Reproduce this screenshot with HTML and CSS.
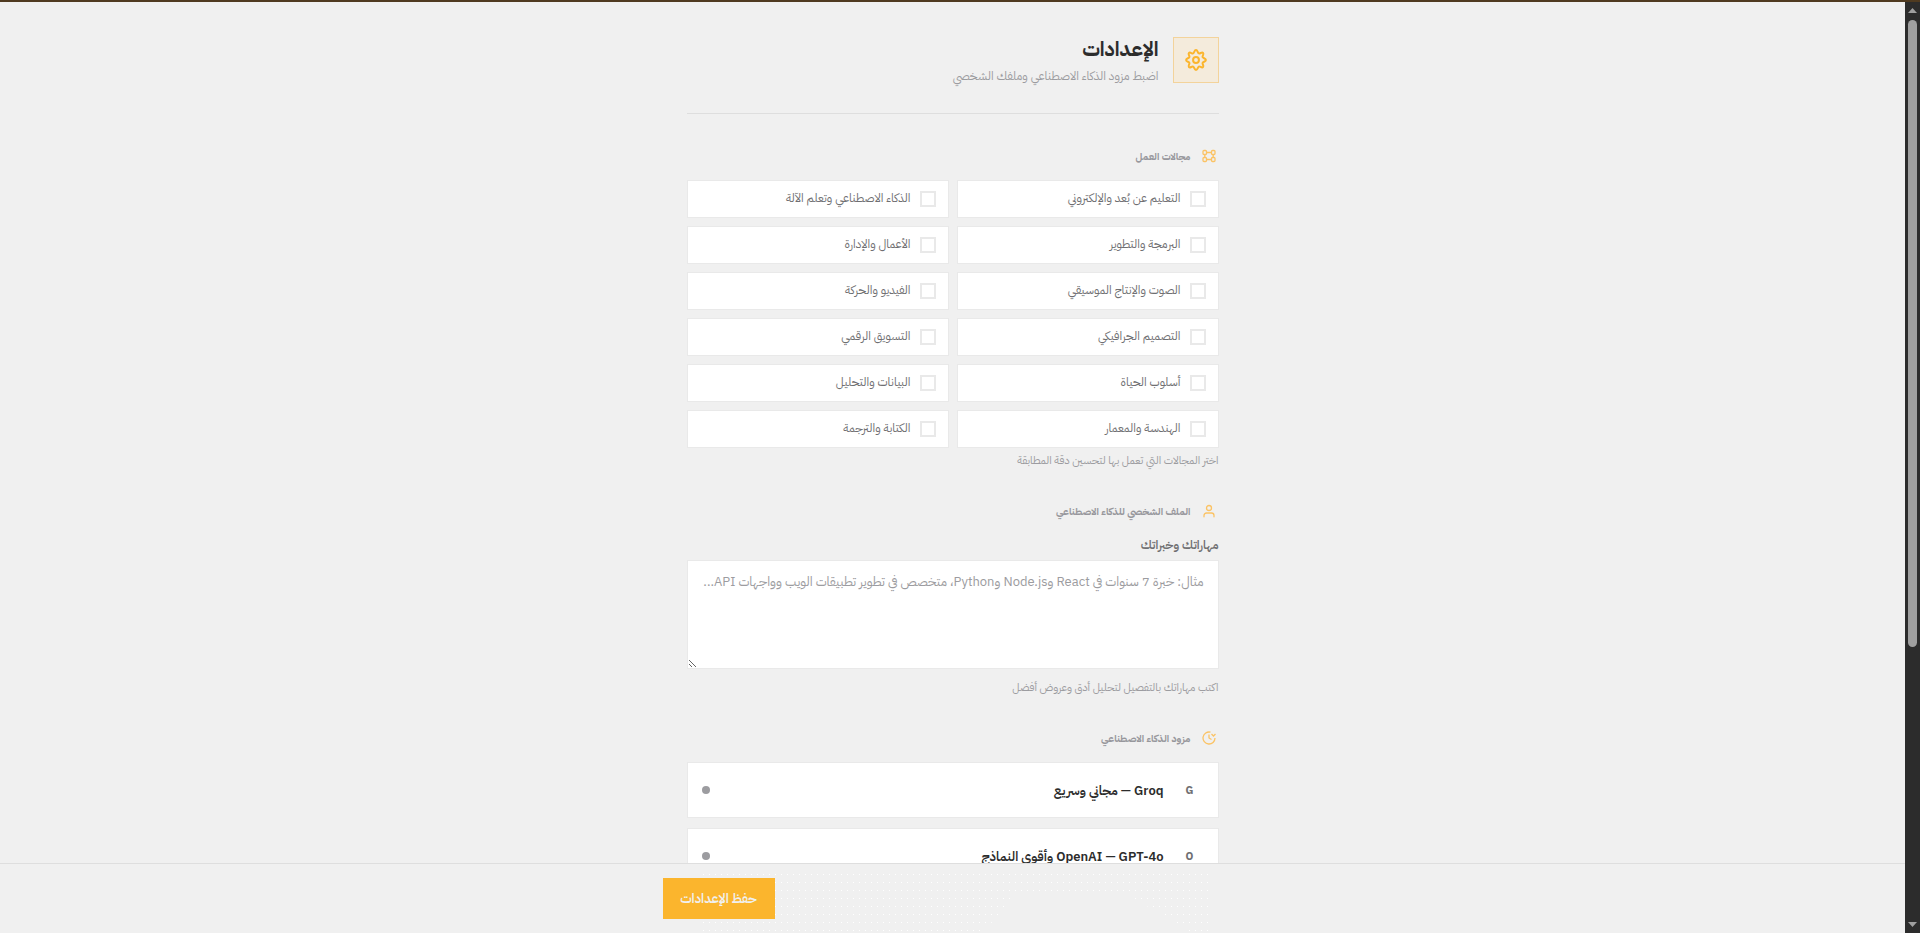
FILE: index.html
```html
<!DOCTYPE html>
<html lang="ar" dir="rtl">
<head>
  <meta charset="UTF-8">
  <title>الإعدادات</title>
  <link rel="stylesheet" href="styles.css">
</head>
<body>
  <div class="top-line"></div>
  <div class="frame">
    <div class="scrollbar">
      <svg width="9" height="5" viewBox="0 0 9 5"><path d="M0 5L4.500 0L9 5z" fill="#9f9f9f"/></svg>
      <div class="track"><div class="thumb"></div></div>
      <svg width="9" height="5" viewBox="0 0 9 5"><path d="M0 0h9L4.500 5z" fill="#9f9f9f"/></svg>
    </div>

    <div class="view">
      <main class="page">
        <header class="page-header">
          <div class="header-icon">
            <svg width="22" height="22" viewBox="0 0 24 24" fill="none" stroke="currentColor" stroke-width="2.2" stroke-linejoin="round"><circle cx="12" cy="12" r="3.2"/><path d="M12 1.200c1.900 0 1.700 3 3.100 3.600s3.300-1.900 4.600-.5-1.100 3.300-.5 4.600 3.600 1.200 3.600 3.100-3 1.700-3.600 3.100 1.900 3.300.5 4.600-3.300-1.100-4.600-.5-1.200 3.600-3.100 3.600-1.700-3-3.100-3.600-3.300 1.900-4.600.5 1.100-3.300.5-4.600-3.600-1.200-3.600-3.100 3-1.700 3.600-3.100-1.900-3.300-.5-4.600 3.300 1.100 4.600.5 1.200-3.600 3.100-3.600z"/></svg>
          </div>
          <div>
            <h1>الإعدادات</h1>
            <p class="subtitle">اضبط مزود الذكاء الاصطناعي وملفك الشخصي</p>
          </div>
        </header>

        <section>
          <h2 class="section-title">
            <span class="section-icon"><svg width="14" height="14" viewBox="0 0 14 14" fill="none" stroke="currentColor" stroke-width="1.3"><rect x="1" y="1.500" width="3.500" height="4" rx="1"/><rect x="9.500" y="1.500" width="3.500" height="4" rx="1"/><rect x="1" y="8.500" width="3.500" height="4" rx="1"/><rect x="9.500" y="8.500" width="3.500" height="4" rx="1"/><path d="M4.500 3.500h5M4.500 10.500h5M2.800 5.500v3M11.200 5.500v3"/></svg></span>
            مجالات العمل
          </h2>
          <div class="fields">
            <label class="field"><input type="checkbox"><span>التعليم عن بُعد والإلكتروني</span></label>
            <label class="field"><input type="checkbox"><span>الذكاء الاصطناعي وتعلم الآلة</span></label>
            <label class="field"><input type="checkbox"><span>البرمجة والتطوير</span></label>
            <label class="field"><input type="checkbox"><span>الأعمال والإدارة</span></label>
            <label class="field"><input type="checkbox"><span>الصوت والإنتاج الموسيقي</span></label>
            <label class="field"><input type="checkbox"><span>الفيديو والحركة</span></label>
            <label class="field"><input type="checkbox"><span>التصميم الجرافيكي</span></label>
            <label class="field"><input type="checkbox"><span>التسويق الرقمي</span></label>
            <label class="field"><input type="checkbox"><span>أسلوب الحياة</span></label>
            <label class="field"><input type="checkbox"><span>البيانات والتحليل</span></label>
            <label class="field"><input type="checkbox"><span>الهندسة والمعمار</span></label>
            <label class="field"><input type="checkbox"><span>الكتابة والترجمة</span></label>
          </div>
          <p class="hint">اختر المجالات التي تعمل بها لتحسين دقة المطابقة</p>
        </section>

        <section>
          <h2 class="section-title">
            <span class="section-icon"><svg width="14" height="14" viewBox="0 0 14 14" fill="none" stroke="currentColor" stroke-width="1.3" stroke-linecap="round"><circle cx="7" cy="4" r="2.5"/><path d="M2 12.800v-1.300a2.500 2.500 0 0 1 2.500-2.500h5a2.500 2.500 0 0 1 2.500 2.500v1.300"/></svg></span>
            الملف الشخصي للذكاء الاصطناعي
          </h2>
          <label class="input-label" for="skills">مهاراتك وخبراتك</label>
          <textarea id="skills" placeholder="مثال: خبرة 7 سنوات في React وNode.js وPython، متخصص في تطوير تطبيقات الويب وواجهات API..."></textarea>
          <p class="hint skills-hint">اكتب مهاراتك بالتفصيل لتحليل أدق وعروض أفضل</p>
        </section>

        <section>
          <h2 class="section-title">
            <span class="section-icon"><svg width="14" height="14" viewBox="0 0 14 14" fill="none" stroke="currentColor" stroke-width="1.3"><path d="M8.500 1.200a6 6 0 1 0 4.500 5.800"/><path d="M7 3.500v3.500l2.500 1.500M9.500 3l2 2L13.500 3"/></svg></span>
            مزود الذكاء الاصطناعي
          </h2>
          <div class="providers">
            <button type="button" class="provider"><span class="letter">G</span><span class="name">Groq — مجاني وسريع</span><span class="dot"></span></button>
            <button type="button" class="provider"><span class="letter">O</span><span class="name">OpenAI — GPT-4o وأقوى النماذج</span><span class="dot"></span></button>
          </div>
        </section>
      </main>

      <footer class="save-bar">
        <div class="save-inner">
          <button type="submit" class="save">حفظ الإعدادات</button>
        </div>
      </footer>
    </div>
  </div>
</body>
</html>
```

FILE: styles.css
```css
* {
  box-sizing: border-box;
}

body {
  margin: 0;
  height: 100vh;
  display: flex;
  flex-direction: column;
  overflow: hidden;
  background: #f0f0f0;
  color: #2c2c2c;
  font-family: "IBM Plex Sans Arabic", "Noto Sans", "DejaVu Sans", sans-serif;
}

h1, h2, p {
  margin: 0;
}

.top-line {
  height: 2px;
  flex: none;
  background: #4f3a20;
}

.frame {
  flex: 1;
  min-height: 0;
  display: flex;
}

.view {
  flex: 1;
  display: flex;
  flex-direction: column;
}

.page {
  flex: 1;
  min-height: 0;
  overflow: hidden;
  width: 100%;
  max-width: 580px;
  margin: 0 auto;
  padding: 35px 24px 0;
}

.page-header {
  display: flex;
  gap: 14px;
  height: 77px;
  border-bottom: 1px solid #dedede;
  margin-bottom: 32px;
}

.header-icon {
  width: 46px;
  height: 46px;
  display: flex;
  align-items: center;
  justify-content: center;
  color: #fbb52d;
  background: #f4ebdc;
  border: 1px solid #f3d39b;
}

h1 {
  font-size: 20px;
  line-height: 24px;
}

.subtitle {
  margin-top: 4px;
  font-size: 12px;
  line-height: 22px;
  color: #9c9ca0;
}

.section-title {
  display: flex;
  align-items: center;
  gap: 8px;
  height: 20px;
  margin-bottom: 14px;
  font-size: 10px;
  color: #97979c;
}

.section-icon {
  width: 20px;
  display: flex;
  justify-content: center;
  color: #fbc365;
}

.fields {
  display: grid;
  grid-template-columns: 1fr 1fr;
  gap: 8px;
}

.field {
  display: flex;
  align-items: center;
  gap: 9px;
  height: 38px;
  padding: 0 12px;
  background: #fff;
  border: 1px solid #e9e9e9;
  font-size: 12px;
  line-height: 18px;
  color: #6f6f72;
}

.field span {
  padding-bottom: 2px;
}

.field input {
  appearance: none;
  width: 16px;
  height: 16px;
  margin: 0;
  border: 2px solid #e9e9e9;
  background: #fff;
}

.hint {
  margin: 4px 0 31px;
  font-size: 11px;
  line-height: 18px;
  color: #9c9ca0;
}

.skills-hint {
  margin-top: 10px;
}

.input-label {
  display: block;
  margin-bottom: 5px;
  font-size: 12px;
  line-height: 20px;
  font-weight: 600;
  color: #6f6f72;
}

textarea {
  display: block;
  width: 100%;
  height: 109px;
  padding: 10px 14px;
  background: #fff;
  border: 1px solid #e9e9e9;
  border-radius: 0;
  font-family: inherit;
  font-size: 13px;
  line-height: 22px;
  resize: vertical;
}

textarea::placeholder {
  color: #9c9ca0;
}

.providers {
  display: flex;
  flex-direction: column;
  gap: 10px;
}

.provider {
  display: flex;
  align-items: center;
  gap: 12px;
  height: 56px;
  padding: 0 14px;
  background: #fff;
  border: 1px solid #e9e9e9;
  font-family: inherit;
  text-align: start;
  color: #2c2c2c;
}

.letter {
  width: 28px;
  text-align: center;
  font-size: 11px;
  font-weight: bold;
  color: #6f6f72;
}

.name {
  flex: 1;
  font-size: 13px;
  font-weight: 600;
}

.dot {
  width: 8px;
  height: 8px;
  border-radius: 50%;
  background: #9c9ca0;
}

.save-bar {
  flex: none;
  border-top: 1px solid #dedede;
}

.save-inner {
  position: relative;
  display: flex;
  justify-content: flex-end;
  max-width: 580px;
  margin: 0 auto;
  padding: 14px 0;
}

/* faint dotted texture behind the save button */
.save-inner::before {
  content: "";
  position: absolute;
  top: 9px;
  right: 32px;
  bottom: 0;
  left: 40px;
  background: conic-gradient(from 270deg at 1px 1px, #fff 90deg, transparent 0) 0 1px / 6px 8px;
  clip-path: polygon(0 0, 100% 0, 100% 100%, 96% 100%, 84% 22px, 62% 22px, 55% 100%, 0 100%);
}

.save {
  position: relative;
  width: 112px;
  height: 41px;
  padding: 0;
  border: none;
  background: #fbb52d;
  color: #f0f0f0;
  font-family: inherit;
  font-size: 13px;
  font-weight: 600;
}

/* first in the markup, so rtl puts it on the right edge */
.scrollbar {
  width: 15px;
  padding: 6px 0;
  display: flex;
  flex-direction: column;
  align-items: center;
  background: #2c2c2c;
}

.track {
  flex: 1;
  padding: 7px 0;
}

.thumb {
  width: 9px;
  height: 70%;
  border-radius: 5px;
  background: #9f9f9f;
}
```
